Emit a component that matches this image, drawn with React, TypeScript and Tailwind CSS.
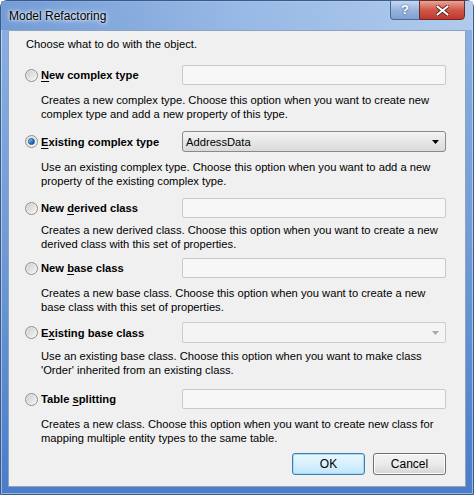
import React from 'react';

const font = "font-['Segoe_UI','Liberation_Sans',Arial,sans-serif]";

function Radio({ checked }: { checked?: boolean }) {
  return (
    <span className="relative flex h-[13px] w-[13px] shrink-0 items-center justify-center rounded-full border border-[#8e8f8f] bg-gradient-to-br from-[#dcdcdc] to-[#f8f8f8]">
      {checked ? (
        <span className="h-[7px] w-[7px] rounded-full border border-[#1b4f8f] bg-gradient-to-br from-[#bfe2fb] via-[#2f7fd0] to-[#0f4f9a]" />
      ) : (
        <span className="h-[9px] w-[9px] rounded-full bg-gradient-to-br from-[#cfcfcf] to-[#f4f4f4]" />
      )}
    </span>
  );
}

function Label({ pre, key1, post }: { pre: string; key1: string; post: string }) {
  return (
    <span className="whitespace-nowrap text-[11.2px] font-bold text-black">
      {pre}
      <span className="underline underline-offset-2">{key1}</span>
      {post}
    </span>
  );
}

function TextBox() {
  return <div className="h-[20px] w-[264px] rounded-[2px] border border-[#c9c9c9] bg-[#f7f7f7]" />;
}

function Combo({ value }: { value: string }) {
  return (
    <div className="flex h-[21px] w-[264px] items-center justify-between rounded-[3px] border border-[#8a8a8a] bg-gradient-to-b from-[#f4f4f4] to-[#dadada] pl-[3px] pr-[6px] text-[11.2px] text-black">
      <span>{value}</span>
      <svg width="7" height="4" viewBox="0 0 7 4">
        <path d="M0 0h7L3.5 4z" fill="#000" />
      </svg>
    </div>
  );
}

function ComboDisabled() {
  return (
    <div className="flex h-[21px] w-[264px] items-center justify-end rounded-[2px] border border-[#cdcdcd] bg-[#f4f4f4] pr-[6px]">
      <svg width="7" height="4" viewBox="0 0 7 4">
        <path d="M0 0h7L3.5 4z" fill="#a8a8a8" />
      </svg>
    </div>
  );
}

type Opt = {
  pre: string;
  k: string;
  post: string;
  checked?: boolean;
  field: React.ReactNode;
  lines: [string, string];
  mt: string;
  dmt: string;
};

const options: Opt[] = [
  {
    pre: '',
    k: 'N',
    post: 'ew complex type',
    field: <TextBox />,
    lines: [
      'Creates a new complex type. Choose this option when you want to create new',
      'complex type and add a new property of this type.',
    ],
    mt: 'mt-[14px]',
    dmt: 'mt-[8px]',
  },
  {
    pre: '',
    k: 'E',
    post: 'xisting complex type',
    checked: true,
    field: <Combo value="AddressData" />,
    lines: [
      'Use an existing complex type. Choose this option when you want to add a new',
      'property of the existing complex type.',
    ],
    mt: 'mt-[10px]',
    dmt: 'mt-[8px]',
  },
  {
    pre: 'New ',
    k: 'd',
    post: 'erived class',
    field: <TextBox />,
    lines: [
      'Creates a new derived class. Choose this option when you want to create a new',
      'derived class with this set of properties.',
    ],
    mt: 'mt-[10px]',
    dmt: 'mt-[5px]',
  },
  {
    pre: 'New ',
    k: 'b',
    post: 'ase class',
    field: <TextBox />,
    lines: [
      'Creates a new base class. Choose this option when you want to create a new',
      'base class with this set of properties.',
    ],
    mt: 'mt-[7px]',
    dmt: 'mt-[8px]',
  },
  {
    pre: 'E',
    k: 'x',
    post: 'isting base class',
    field: <ComboDisabled />,
    lines: [
      'Use an existing base class. Choose this option when you want to make class',
      "'Order' inherited from an existing class.",
    ],
    mt: 'mt-[8px]',
    dmt: 'mt-[6px]',
  },
  {
    pre: 'Table ',
    k: 's',
    post: 'plitting',
    field: <TextBox />,
    lines: [
      'Creates a new class. Choose this option when you want to create new class for',
      'mapping multiple entity types to the same table.',
    ],
    mt: 'mt-[12px]',
    dmt: 'mt-[8px]',
  },
];

export default function App() {
  return (
    <div className={`${font} h-[495px] w-[474px] overflow-hidden bg-white`}>
      <div className="flex h-full w-full flex-col rounded-t-[7px] border border-[#3a5a8a] bg-gradient-to-b from-[#8db2e3] via-[#6f9ad5] to-[#4a7cc9] px-[7px] pb-[7px] shadow-[inset_0_0_0_1px_rgba(255,255,255,0.45)]">
        {/* title bar */}
        <div className="relative flex h-[29px] shrink-0 items-center">
          <div className="absolute inset-x-[-7px] top-0 h-[29px] bg-gradient-to-r from-[#6d96d2] via-[#9bbbe6] to-[#b9d1ef] opacity-80" />
          <span className="relative pl-[1px] pt-[1px] text-[12px] text-black [text-shadow:0_0_6px_#fff,0_0_3px_#fff]">
            Model Refactoring
          </span>
          <div className="absolute right-[1px] top-[-1px] flex">
            <div className="flex h-[20px] w-[29px] items-center justify-center rounded-bl-[4px] border border-[#4a6a98] border-r-0 bg-gradient-to-b from-[#c6d8ef] via-[#98b4dc] to-[#7fa0d2] text-[13px] font-bold text-white [text-shadow:0_0_2px_#2b4a78]">
              ?
            </div>
            <div className="flex h-[20px] w-[46px] items-center justify-center rounded-br-[4px] border border-[#6b2a2a] bg-gradient-to-b from-[#e8a394] via-[#d0564a] to-[#c2352b]">
              <svg width="13" height="11" viewBox="0 0 13 11">
                <path d="M1.5 1.5l10 8M11.5 1.5l-10 8" stroke="#5a1a1a" strokeWidth="3.6" strokeLinecap="round" />
                <path d="M1.5 1.5l10 8M11.5 1.5l-10 8" stroke="#fff" strokeWidth="2.2" strokeLinecap="round" />
              </svg>
            </div>
          </div>
        </div>

        {/* client area */}
        <div className="flex flex-1 flex-col border border-[#8ea3c2] bg-[#f0f0f0] pl-[16px] pr-[19px] pt-[6px] text-[11.2px] leading-[14px] text-black">
          <div className="pl-[1px]">Choose what to do with the object.</div>

          {options.map((o, i) => (
            <div key={i} className={`flex flex-col ${o.mt}`}>
              <div className="flex items-center">
                <div className="flex w-[157px] items-center gap-[3px]">
                  <Radio checked={o.checked} />
                  <Label pre={o.pre} key1={o.k} post={o.post} />
                </div>
                {o.field}
              </div>
              <div className={`${o.dmt} whitespace-nowrap pl-[16px]`}>
                <div>{o.lines[0]}</div>
                <div>{o.lines[1]}</div>
              </div>
            </div>
          ))}

          <div className="mt-[8px] flex justify-end gap-[8px]">
            <button className="flex h-[22px] w-[73px] items-center justify-center rounded-[3px] border border-[#3c7fb1] bg-gradient-to-b from-[#eaf6fd] via-[#d9f0fc] to-[#bee6fd] text-[12px] text-black shadow-[inset_0_0_0_1px_#a7d9f5]">
              OK
            </button>
            <button className="flex h-[22px] w-[73px] items-center justify-center rounded-[3px] border border-[#707070] bg-gradient-to-b from-[#f2f2f2] via-[#ebebeb] to-[#d5d5d5] text-[12px] text-black shadow-[inset_0_0_0_1px_#fcfcfc]">
              Cancel
            </button>
          </div>
        </div>
      </div>
    </div>
  );
}
